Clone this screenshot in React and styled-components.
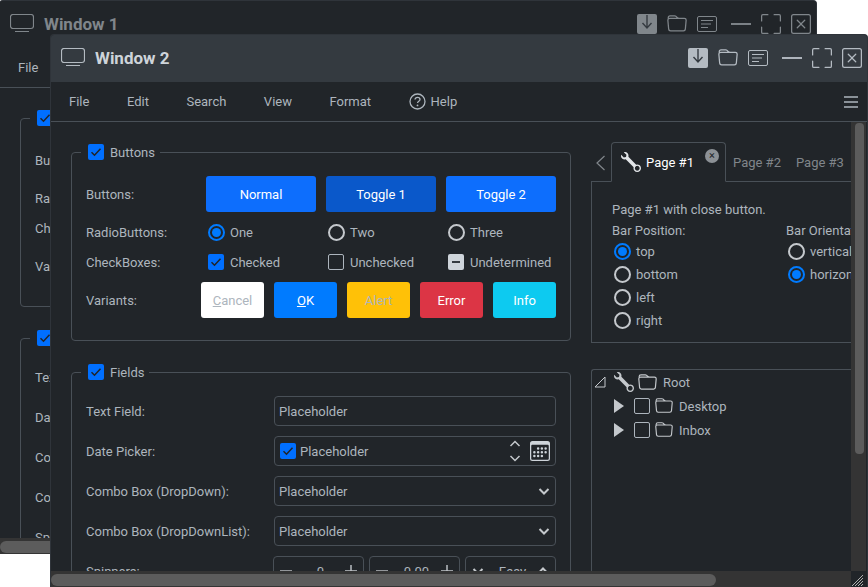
import React from "react";
import styled, { createGlobalStyle } from "styled-components";
import { BsFolder, BsFullscreen, BsXSquare, BsWrench, BsCalendar3 } from "react-icons/bs";

const GlobalStyle = createGlobalStyle`
  html, body { margin: 0; padding: 0; background: #fff; overflow: hidden; }
  body { width: 868px; height: 587px; font-family: Roboto, "Liberation Sans", sans-serif; font-size: 13px; }
`;

const MonitorIcon = () => (
  <svg width="24" height="19" viewBox="0 0 24 19" fill="none" stroke="currentColor">
    <rect x="0.5" y="0.5" width="23" height="14" rx="2.5" strokeWidth="1.2" />
    <path d="M5 17.5h14" strokeWidth="1.2" />
  </svg>
);

const DownloadIcon = () => (
  <svg width="20" height="20" viewBox="0 0 20 20">
    <rect width="20" height="20" rx="2" fill="currentColor" />
    <path d="M10 1v12M5.5 9l4.5 5 4.5-5" fill="none" stroke="#343a40" strokeWidth="1.4" />
  </svg>
);

const NotesIcon = () => (
  <svg width="20" height="16" viewBox="0 0 20 16" fill="none" stroke="currentColor">
    <rect x="0.5" y="0.5" width="19" height="15" rx="1.5" />
    <path d="M4 4.5h12M4 8h10M4 11.5h7" strokeWidth="1.2" />
  </svg>
);

const MinimizeIcon = () => (
  <svg width="21" height="20" viewBox="0 0 21 20">
    <rect y="9" width="21" height="2" fill="currentColor" />
  </svg>
);

const HelpIcon = () => (
  <svg width="17" height="17" viewBox="0 0 17 17" fill="none" stroke="currentColor">
    <circle cx="8.5" cy="8.5" r="7.5" strokeWidth="1.3" />
    <path d="M6 6.6c0-1.5 1.1-2.3 2.5-2.3s2.5.8 2.5 2.1c0 1.9-2.5 1.8-2.5 3.7" strokeWidth="1.3" />
    <circle cx="8.5" cy="12.4" r="0.9" fill="currentColor" stroke="none" />
  </svg>
);

const MenuIcon = () => (
  <svg width="14" height="12" viewBox="0 0 14 12">
    <path d="M0 1h14M0 6h14M0 11h14" stroke="currentColor" strokeWidth="1.5" />
  </svg>
);

const Tick = () => (
  <svg width="16" height="16" viewBox="0 0 16 16" fill="none">
    <path d="M3.5 8.2l3 3 6-6.5" stroke="#212529" strokeWidth="1.5" />
  </svg>
);

const Chevron = ({ dir, size = 12, weight = 1.5 }) => (
  <svg width={size} height={size} viewBox="0 0 12 12" fill="none" stroke="currentColor" strokeWidth={weight}>
    <path d={dir === "up" ? "M1.5 8l4.5-4.5L10.5 8" : "M1.5 4l4.5 4.5L10.5 4"} />
  </svg>
);

const StepIcon = ({ plus }) => (
  <svg width="12" height="12" viewBox="0 0 12 12" stroke="currentColor" strokeWidth="1.4">
    <path d={plus ? "M0 6h12M6 0v12" : "M0 6h12"} />
  </svg>
);

const Windows = styled.div`
  position: relative;
  width: 868px;
  height: 587px;
  overflow: hidden;
`;

const Frame = styled.div`
  position: absolute;
  isolation: isolate;
  left: ${(p) => p.$x}px;
  top: ${(p) => p.$y}px;
  width: ${(p) => p.$w}px;
  height: ${(p) => p.$h}px;
  box-sizing: border-box;
  display: flex;
  flex-direction: column;
  background: #212529;
  border: 1px solid #2f343a;
  border-bottom: 0;
  border-radius: 4px 4px 0 0;
  overflow: hidden;
  color: #adb5bd;
`;

const TitleBar = styled.div`
  flex: none;
  box-sizing: border-box;
  height: 47px;
  display: flex;
  align-items: center;
  padding: 0 5px 2px 10px;
  background: ${(p) => (p.$active ? "#343a40" : "#212529")};
  color: ${(p) => (p.$active ? "#b4bbc2" : "#80868b")};
`;

const WindowTitle = styled.div`
  flex: 1;
  margin-left: 10px;
  font-size: 17px;
  font-weight: 700;
  color: ${(p) => (p.$active ? "#ced4da" : "#80868b")};
`;

const TitleButton = styled.div`
  width: 20px;
  height: 20px;
  display: flex;
  align-items: center;
  justify-content: center;
  font-size: 20px;
  margin-left: ${(p) => p.$gap || 10}px;
`;

const MenuBar = styled.div`
  flex: none;
  height: 39px;
  display: flex;
  align-items: center;
  gap: 37.5px;
  padding: 0 9px 0 18px;
  border-bottom: 1px solid #495057;
`;

const MenuItem = styled.div`
  display: flex;
  align-items: center;
  gap: 5px;
`;

const MenuEnd = styled.div`
  margin-left: auto;
  display: flex;
`;

const Body = styled.div`
  flex: 1;
  min-height: 0;
  display: flex;
`;

const Viewport = styled.div`
  flex: 1;
  min-width: 0;
  overflow: hidden;
`;

const Columns = styled.div`
  display: flex;
  gap: 20px;
  padding: 20px 0 0 20px;
`;

const LeftColumn = styled.div`
  flex: none;
  width: 500px;
  display: flex;
  flex-direction: column;
  gap: 21px;
`;

const RightColumn = styled.div`
  flex: none;
  width: 400px;
  display: flex;
  flex-direction: column;
  gap: 26px;
`;

const Group = styled.fieldset`
  margin: 0;
  padding: 14px 14px 22px;
  min-width: 0;
  border: 1px solid #495057;
  border-radius: 4px;
`;

const GroupTitle = styled.legend`
  margin-left: -5px;
  padding: 0 5px 0 7px;
  height: 20px;
  display: flex;
  align-items: center;
  gap: 6px;
`;

const Box = styled.span`
  flex: none;
  box-sizing: border-box;
  width: 16px;
  height: 16px;
  display: inline-flex;
  align-items: center;
  justify-content: center;
  border-radius: 2px;
  background: ${(p) => (p.$state === "on" ? "#006fff" : p.$state === "mixed" ? "#ced4da" : "transparent")};
  border: ${(p) => (p.$state === "off" ? "1.5px solid #adb5bd" : "none")};
`;

const MixedBar = styled.span`
  width: 8px;
  height: 2px;
  background: #343a40;
`;

const Radio = styled.span`
  flex: none;
  box-sizing: border-box;
  width: 17px;
  height: 17px;
  border-radius: 50%;
  border: 2px solid ${(p) => (p.$on ? "#007bff" : "#c4c8cc")};
  padding: 2px;
  &::after {
    content: "";
    display: ${(p) => (p.$on ? "block" : "none")};
    width: 9px;
    height: 9px;
    border-radius: 50%;
    background: #007bff;
  }
`;

const Choice = styled.label`
  display: flex;
  align-items: center;
  gap: ${(p) => p.$gap || 5}px;
  height: 20px;
  margin-left: ${(p) => p.$indent || 0}px;
`;

const ButtonGrid = styled.div`
  display: grid;
  grid-template-columns: 110px repeat(3, 110px);
  column-gap: 10px;
  align-items: center;
`;

const GridLabel = styled.div`
  height: 20px;
  line-height: 22px;
`;

const PushButton = styled.div`
  height: 36px;
  display: flex;
  align-items: center;
  justify-content: center;
  border-radius: 3px;
  color: #fff;
  background: ${(p) => p.$bg};
`;

const ChoiceRow = styled.div`
  grid-column: 1 / -1;
  display: grid;
  grid-template-columns: inherit;
  column-gap: 10px;
  align-items: center;
  margin-top: 10px;
`;

const VariantRow = styled.div`
  margin-top: 10px;
  display: flex;
  align-items: center;
  justify-content: space-between;
`;

const Variants = styled.div`
  display: flex;
  gap: 10px;
`;

const VariantButton = styled.div`
  width: 63px;
  height: 36px;
  display: flex;
  align-items: center;
  justify-content: center;
  border-radius: 3px;
  background: ${(p) => p.$bg};
  color: ${(p) => (p.$muted ? "#adb5bd" : "#fff")};
`;

const FieldRows = styled.div`
  display: grid;
  grid-template-columns: 188px 282px;
  row-gap: 10px;
  align-items: center;
`;

const Input = styled.div`
  box-sizing: border-box;
  height: 30px;
  display: flex;
  align-items: center;
  padding: 0 ${(p) => p.$pad || 4}px;
  gap: 4px;
  border: 1px solid #495057;
  border-radius: 4px;
  color: #adb5bd;
`;

const InputText = styled.span`
  flex: 1;
`;

const ComboArrow = styled.span`
  display: flex;
  color: #c4c8cc;
  margin-right: 1px;
`;

const DateButtons = styled.span`
  display: flex;
  flex-direction: column;
  gap: 2px;
  color: #c4c8cc;
  margin-right: 5px;
`;

const DateIcon = styled.span`
  display: flex;
  font-size: 20px;
  color: #ced4da;
`;

const SpinnerRow = styled.div`
  display: flex;
  gap: 5px;
  margin-left: -1px;
`;

const Spinner = styled(Input)`
  flex: 1;
  justify-content: space-between;
  padding: 0 6px;
  color: #c4c8cc;
`;

const SpinnerText = styled.span`
  margin-left: 4px;
  color: #adb5bd;
`;

const TabStrip = styled.div`
  height: 40px;
  display: flex;
  align-items: flex-end;
  margin-bottom: -1px;
  padding-left: 4px;
  color: #80868b;
`;

const TabBack = styled.span`
  width: 16px;
  height: 39px;
  display: flex;
  align-items: center;
`;

const ActiveTab = styled.div`
  box-sizing: border-box;
  position: relative;
  width: 115px;
  height: 40px;
  display: flex;
  align-items: center;
  gap: 5px;
  padding-left: 9px;
  border: 1px solid #495057;
  border-bottom: 1px solid #212529;
  border-radius: 4px 4px 0 0;
  background: #212529;
  color: #fff;
  z-index: 1;
  svg { font-size: 20px; color: #e2e5e8; }
`;

const TabClose = styled.span`
  position: absolute;
  top: 6px;
  right: 6px;
  width: 14px;
  height: 14px;
  border-radius: 50%;
  background: #8c9196;
  color: #212529;
  font-size: 11px;
  line-height: 13px;
  text-align: center;
`;

const Tab = styled.div`
  height: 39px;
  display: flex;
  align-items: center;
  margin-left: ${(p) => p.$gap}px;
`;

const TabPane = styled.div`
  box-sizing: border-box;
  height: 162px;
  padding: 20px 0 0 20px;
  border: 1px solid #495057;
  display: flex;
  flex-direction: column;
`;

const PaneLine = styled.div`
  height: ${(p) => p.$h}px;
  line-height: 16px;
`;

const PaneColumns = styled.div`
  display: grid;
  grid-template-columns: 174px 1fr;
`;

const PaneRadio = styled(Choice)`
  height: 23px;
  margin-left: 2px;
`;

const Tree = styled.div`
  box-sizing: border-box;
  height: 300px;
  border: 1px solid #495057;
  border-right: 0;
  border-bottom: 0;
  border-radius: 3px 0 0 0;
`;

const TreeRow = styled.div`
  height: 24px;
  display: flex;
  align-items: center;
  padding-left: ${(p) => p.$indent}px;
`;

const TreeGlyph = styled.span`
  display: flex;
  width: ${(p) => p.$w}px;
  font-size: ${(p) => p.$size || 18}px;
  color: #c4c8cc;
`;

const VerticalBar = styled.div`
  flex: none;
  width: 15px;
  margin-right: 1px;
  padding: 1px 2px 0 4px;
  box-sizing: border-box;
  background: #343434;
`;

const VerticalThumb = styled.div`
  height: 331px;
  border-radius: 4px;
  background: #5c5c5c;
`;

const BottomRow = styled.div`
  flex: none;
  height: 16px;
  display: flex;
`;

const HorizontalBar = styled.div`
  flex: 1;
  padding: 3px 0 1px;
  background: #343434;
`;

const HorizontalThumb = styled.div`
  height: 12px;
  width: ${(p) => p.$w}px;
  border-radius: 6px;
  background: #5c5c5c;
`;

const Grip = styled.div`
  flex: none;
  width: 16px;
  display: flex;
  align-items: flex-end;
  color: #b0b0b0;
`;

const groupButtons = (
  <Group>
    <GroupTitle>
      <Box $state="on"><Tick /></Box>Buttons
    </GroupTitle>
    <ButtonGrid>
      <GridLabel>Buttons:</GridLabel>
      <PushButton $bg="#0d6efd">Normal</PushButton>
      <PushButton $bg="#0a58ca">Toggle 1</PushButton>
      <PushButton $bg="#0d6efd">Toggle 2</PushButton>
      <ChoiceRow>
        <GridLabel>RadioButtons:</GridLabel>
        <Choice $indent={2}><Radio $on />One</Choice>
        <Choice $indent={2}><Radio />Two</Choice>
        <Choice $indent={2}><Radio />Three</Choice>
      </ChoiceRow>
      <ChoiceRow>
        <GridLabel>CheckBoxes:</GridLabel>
        <Choice $indent={2} $gap={6}><Box $state="on"><Tick /></Box>Checked</Choice>
        <Choice $indent={2} $gap={6}><Box $state="off" />Unchecked</Choice>
        <Choice $indent={2} $gap={6}><Box $state="mixed"><MixedBar /></Box>Undetermined</Choice>
      </ChoiceRow>
    </ButtonGrid>
    <VariantRow>
      <GridLabel>Variants:</GridLabel>
      <Variants>
        <VariantButton $bg="#fff" $muted><u>C</u>ancel</VariantButton>
        <VariantButton $bg="#007bff"><u>O</u>K</VariantButton>
        <VariantButton $bg="#ffc107" $muted>Alert</VariantButton>
        <VariantButton $bg="#dc3545">Error</VariantButton>
        <VariantButton $bg="#0dcaf0">Info</VariantButton>
      </Variants>
    </VariantRow>
  </Group>
);

const groupFields = (
  <Group>
    <GroupTitle>
      <Box $state="on"><Tick /></Box>Fields
    </GroupTitle>
    <FieldRows>
      <GridLabel>Text Field:</GridLabel>
      <Input><InputText>Placeholder</InputText></Input>
      <GridLabel>Date Picker:</GridLabel>
      <Input $pad={5}>
        <Box $state="on"><Tick /></Box>
        <InputText>Placeholder</InputText>
        <DateButtons><Chevron dir="up" /><Chevron dir="down" /></DateButtons>
        <DateIcon><BsCalendar3 /></DateIcon>
      </Input>
      <GridLabel>Combo Box (DropDown):</GridLabel>
      <Input><InputText>Placeholder</InputText><ComboArrow><Chevron dir="down" weight={2} /></ComboArrow></Input>
      <GridLabel>Combo Box (DropDownList):</GridLabel>
      <Input><InputText>Placeholder</InputText><ComboArrow><Chevron dir="down" weight={2} /></ComboArrow></Input>
      <GridLabel>Spinners:</GridLabel>
      <SpinnerRow>
        <Spinner><StepIcon /><SpinnerText>0</SpinnerText><StepIcon plus /></Spinner>
        <Spinner><StepIcon /><SpinnerText>0.00</SpinnerText><StepIcon plus /></Spinner>
        <Spinner><Chevron dir="down" weight={2} /><SpinnerText>Easy</SpinnerText><Chevron dir="up" weight={2} /></Spinner>
      </SpinnerRow>
    </FieldRows>
  </Group>
);

const tabs = (
  <div>
    <TabStrip>
      <TabBack>
        <svg width="11" height="16" viewBox="0 0 11 16" fill="none" stroke="currentColor" strokeWidth="1.2">
          <path d="M9.5 1L2 8l7.5 7" />
        </svg>
      </TabBack>
      <ActiveTab>
        <BsWrench />Page #1
        <TabClose>×</TabClose>
      </ActiveTab>
      <Tab $gap={7}>Page #2</Tab>
      <Tab $gap={15}>Page #3</Tab>
    </TabStrip>
    <TabPane>
      <PaneLine $h={21}>Page #1 with close button.</PaneLine>
      <PaneColumns>
        <div>
          <PaneLine $h={17}>Bar Position:</PaneLine>
          <PaneRadio><Radio $on />top</PaneRadio>
          <PaneRadio><Radio />bottom</PaneRadio>
          <PaneRadio><Radio />left</PaneRadio>
          <PaneRadio><Radio />right</PaneRadio>
        </div>
        <div>
          <PaneLine $h={17}>Bar Orientation:</PaneLine>
          <PaneRadio><Radio />vertical</PaneRadio>
          <PaneRadio><Radio $on />horizontal</PaneRadio>
        </div>
      </PaneColumns>
    </TabPane>
  </div>
);

const TriangleOpen = () => (
  <svg width="12" height="12" viewBox="0 0 12 12" fill="none" stroke="#c4c8cc">
    <path d="M1 11h10V1z" />
  </svg>
);

const TriangleShut = () => (
  <svg width="10" height="14" viewBox="0 0 10 14">
    <path d="M0 0l10 7-10 7z" fill="#c4c8cc" />
  </svg>
);

const tree = (
  <Tree>
    <TreeRow $indent={2}>
      <TreeGlyph $w={20}><TriangleOpen /></TreeGlyph>
      <TreeGlyph $w={24} $size={20}><BsWrench /></TreeGlyph>
      <TreeGlyph $w={25} $size={19}><BsFolder /></TreeGlyph>
      Root
    </TreeRow>
    {["Desktop", "Inbox"].map((name) => (
      <TreeRow key={name} $indent={22}>
        <TreeGlyph $w={20}><TriangleShut /></TreeGlyph>
        <TreeGlyph $w={21}><Box $state="off" /></TreeGlyph>
        <TreeGlyph $w={24}><BsFolder /></TreeGlyph>
        {name}
      </TreeRow>
    ))}
  </Tree>
);

function Window({ title, x, y, h, active }) {
  return (
    <Frame $x={x} $y={y} $w={818} $h={h}>
      <TitleBar $active={active}>
        <MonitorIcon />
        <WindowTitle $active={active}>{title}</WindowTitle>
        <TitleButton><DownloadIcon /></TitleButton>
        <TitleButton><BsFolder /></TitleButton>
        <TitleButton><NotesIcon /></TitleButton>
        <TitleButton $gap={14}><MinimizeIcon /></TitleButton>
        <TitleButton><BsFullscreen /></TitleButton>
        <TitleButton><BsXSquare /></TitleButton>
      </TitleBar>
      <MenuBar>
        <MenuItem>File</MenuItem>
        <MenuItem>Edit</MenuItem>
        <MenuItem>Search</MenuItem>
        <MenuItem>View</MenuItem>
        <MenuItem>Format</MenuItem>
        <MenuItem><HelpIcon />Help</MenuItem>
        <MenuEnd><MenuIcon /></MenuEnd>
      </MenuBar>
      <Body>
        <Viewport>
          <Columns>
            <LeftColumn>
              {groupButtons}
              {groupFields}
            </LeftColumn>
            <RightColumn>
              {tabs}
              {tree}
            </RightColumn>
          </Columns>
        </Viewport>
        <VerticalBar><VerticalThumb /></VerticalBar>
      </Body>
      <BottomRow>
        <HorizontalBar><HorizontalThumb $w={665} /></HorizontalBar>
        <Grip>
          <svg width="13" height="13" viewBox="0 0 13 13" stroke="currentColor">
            <path d="M1 12L12 1M4 12l8-8M7 12l5-5M10 12l2-2" />
          </svg>
        </Grip>
      </BottomRow>
    </Frame>
  );
}

export default function App() {
  return (
    <Windows>
      <GlobalStyle />
      <Window title="Window 1" x={-1} y={0} h={554} />
      <Window title="Window 2" x={50} y={34} h={553} active />
    </Windows>
  );
}
